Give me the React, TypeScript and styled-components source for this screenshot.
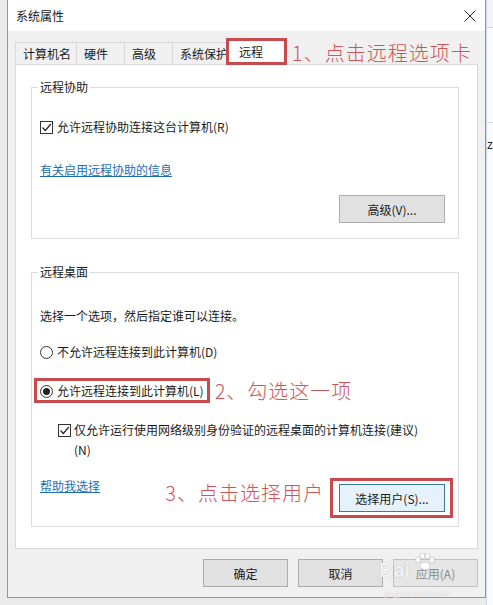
import React from 'react';
import styled, { createGlobalStyle } from 'styled-components';

const GlobalStyle = createGlobalStyle`
  html, body {
    margin: 0;
    padding: 0;
    background: #ebebeb;
    font-family: "Noto Sans CJK SC", "Microsoft YaHei", "Liberation Sans", sans-serif;
    font-size: 12px;
    color: #1a1a1a;
  }
`;

const Page = styled.div`
  display: flex;
  height: 605px;
  padding-left: 7px;
  box-sizing: border-box;
  overflow: hidden;
`;

const Window = styled.div`
  width: 479px;
  height: 598px;
  flex: none;
  box-sizing: border-box;
  border: 1px solid #6f9dd3;
  border-top: none;
  background: #f0f0f0;
  display: flex;
  flex-direction: column;
`;

const SideStrip = styled.div`
  flex: 1;
  display: flex;
  flex-direction: column;
  background: #fbfbfb;
  border-left: 1px solid #c9d8ea;
`;

const SideHead = styled.div`
  height: 27px;
  background: #f3f3f3;
  border-bottom: 1px solid #d6d6d6;
`;

const SideRow = styled.div`
  height: 94px;
  border-bottom: 1px solid #d6d6d6;
`;

const SideText = styled.div`
  margin-top: 14px;
  font-family: "Liberation Sans", sans-serif;
  font-size: 12px;
  line-height: 16px;
  color: #222;
`;

const TitleBar = styled.div`
  height: 31px;
  flex: none;
  background: #ffffff;
  display: flex;
  align-items: center;
  justify-content: space-between;
  padding: 0 9px 0 8px;
`;

const Title = styled.span`
  font-size: 12px;
  line-height: 16px;
`;

const Body = styled.div`
  flex: 1;
  display: flex;
  flex-direction: column;
  padding: 7px 7px 10px 7px;
`;

const TabRow = styled.div`
  display: flex;
  align-items: flex-end;
  height: 26px;
  flex: none;
`;

const Tab = styled.div<{ $w: number }>`
  width: ${p => p.$w}px;
  height: 22px;
  box-sizing: border-box;
  border: 1px solid #d9d9d9;
  border-bottom: none;
  margin-right: -1px;
  padding-left: 7px;
  line-height: 21px;
  white-space: nowrap;
  overflow: hidden;
  background: #f0f0f0;
`;

const RedMark = styled.div<{ $pad: string; $ml?: number; $mr?: number }>`
  display: inline-flex;
  align-items: center;
  box-sizing: border-box;
  border: 3px solid #c94a4d;
  padding: ${p => p.$pad};
  margin-left: ${p => p.$ml ?? 0}px;
  margin-right: ${p => p.$mr ?? 0}px;
  flex: none;
`;

const TabMark = styled(RedMark)`
  height: 27px;
  width: 61px;
  margin-bottom: -1px;
  background: #ffffff;
  position: relative;
  z-index: 1;
`;

const SelectedTab = styled.div`
  line-height: 21px;
  padding-left: 10px;
`;

const Note = styled.span<{ $ml?: number }>`
  font-size: 20px;
  font-weight: 300;
  line-height: 24px;
  color: #cd5558;
  letter-spacing: 1px;
  white-space: nowrap;
  margin-left: ${p => p.$ml ?? 0}px;
`;

const TabNote = styled(Note)`
  align-self: center;
  margin-top: 4px;
`;

const Panel = styled.div`
  height: 485px;
  flex: none;
  box-sizing: border-box;
  background: #ffffff;
  border: 1px solid #d9d9d9;
  padding: 22px 18px 0 15px;
  display: flex;
  flex-direction: column;
`;

const GroupBox = styled.div<{ $h: number; $mt?: number }>`
  height: ${p => p.$h}px;
  margin-top: ${p => p.$mt ?? 0}px;
  box-sizing: border-box;
  border: 1px solid #dcdcdc;
  padding: 0 13px 0 8px;
  display: flex;
  flex-direction: column;
  flex: none;
`;

const GroupTitle = styled.span`
  align-self: flex-start;
  margin: -9px 0 0 -2px;
  padding: 0 2px;
  background: #ffffff;
  line-height: 16px;
`;

const Line = styled.div<{ $mt: number }>`
  margin-top: ${p => p.$mt}px;
  line-height: 16px;
  white-space: nowrap;
`;

const OptionRow = styled.label<{ $mt?: number }>`
  display: flex;
  align-items: center;
  gap: 4px;
  margin-top: ${p => p.$mt ?? 0}px;
  line-height: 16px;
  white-space: nowrap;
`;

const MultiRow = styled.label<{ $mt: number }>`
  display: flex;
  align-items: flex-start;
  gap: 3px;
  margin-top: ${p => p.$mt}px;
  margin-left: 18px;
  line-height: 20px;
  white-space: nowrap;
`;

const Box = styled.span<{ $mt?: number }>`
  width: 13px;
  height: 13px;
  flex: none;
  box-sizing: border-box;
  border: 1px solid #333;
  background: #fff;
  display: flex;
  align-items: center;
  justify-content: center;
  margin-top: ${p => p.$mt ?? 0}px;
`;

const Radio = styled.span<{ $on?: boolean }>`
  width: 13px;
  height: 13px;
  flex: none;
  box-sizing: border-box;
  border: 1px solid #333;
  border-radius: 50%;
  background: #fff;
  display: flex;
  align-items: center;
  justify-content: center;
  &::after {
    content: '';
    width: 7px;
    height: 7px;
    border-radius: 50%;
    background: ${p => (p.$on ? '#222' : 'transparent')};
  }
`;

const Link = styled.a<{ $mt?: number }>`
  align-self: flex-start;
  margin-top: ${p => p.$mt ?? 0}px;
  line-height: 16px;
  color: #1e6db4;
  text-decoration: underline;
  white-space: nowrap;
  cursor: pointer;
`;

const Button = styled.button<{ $w: number; $focus?: boolean; $off?: boolean }>`
  width: ${p => p.$w}px;
  height: 28px;
  flex: none;
  box-sizing: border-box;
  font-family: inherit;
  font-size: 12px;
  padding: 0;
  background: ${p => (p.$focus ? '#e5f1fb' : p.$off ? '#e6e6e6' : '#e1e1e1')};
  border: 1px solid ${p => (p.$focus ? '#3a78b0' : p.$off ? '#c2c2c2' : '#adadad')};
  color: ${p => (p.$off ? '#8a8a8a' : '#1a1a1a')};
`;

const RightButton = styled(Button)`
  align-self: flex-end;
  margin-top: 17px;
`;

const PickRow = styled.div`
  display: flex;
  align-items: center;
  margin-top: 18px;
`;

const BottomRow = styled.div`
  display: flex;
  align-items: center;
  margin-top: 18px;
  height: 40px;
`;

const BottomNote = styled(Note)`
  margin-left: auto;
  margin-right: 6px;
  margin-top: -10px;
`;

const Footer = styled.div`
  position: relative;
  display: flex;
  justify-content: flex-end;
  gap: 10px;
  margin-top: 10px;
`;

const Watermark = styled.div`
  position: absolute;
  left: 364px;
  top: -6px;
  display: flex;
  align-items: flex-start;
  gap: 4px;
  pointer-events: none;
`;

const WaterText = styled.span`
  font-family: "Liberation Sans", sans-serif;
  font-size: 20px;
  font-weight: 700;
  line-height: 26px;
  margin-top: 4px;
  color: rgba(255, 255, 255, 0.85);
  text-shadow: 0 0 1px rgba(90, 90, 90, 0.45);
`;

const WaterSub = styled.span`
  position: absolute;
  left: 6px;
  top: 36px;
  font-family: "Liberation Sans", sans-serif;
  font-size: 8px;
  line-height: 9px;
  color: rgba(255, 255, 255, 0.85);
  text-shadow: 0 0 1px rgba(90, 90, 90, 0.35);
  white-space: nowrap;
`;

const Check = () => (
  <svg width="11" height="11" viewBox="0 0 11 11">
    <path d="M1.5 5.5 L4.3 8.5 L9.8 2" fill="none" stroke="#222" strokeWidth="1.2" />
  </svg>
);

const CloseIcon = () => (
  <svg width="12" height="12" viewBox="0 0 12 12">
    <path d="M0.5 0.5 L11.5 11.5 M11.5 0.5 L0.5 11.5" stroke="#222" strokeWidth="1" />
  </svg>
);

const Paw = () => (
  <svg width="22" height="18" viewBox="0 0 22 18">
    <g fill="rgba(255,255,255,0.85)" stroke="rgba(120,120,120,0.35)" strokeWidth="0.8">
      <ellipse cx="4" cy="7" rx="2.5" ry="3" />
      <ellipse cx="8.5" cy="3" rx="2.5" ry="3" />
      <ellipse cx="13.5" cy="3" rx="2.5" ry="3" />
      <ellipse cx="18" cy="7" rx="2.5" ry="3" />
      <ellipse cx="11" cy="13" rx="5" ry="4" />
    </g>
  </svg>
);

const tabs = [
  { label: '计算机名', w: 62 },
  { label: '硬件', w: 49 },
  { label: '高级', w: 49 },
  { label: '系统保护', w: 57 },
];

export default function App() {
  return (
    <>
      <GlobalStyle />
      <Page>
        <Window>
          <TitleBar>
            <Title>系统属性</Title>
            <CloseIcon />
          </TitleBar>
          <Body>
            <TabRow>
              {tabs.map(t => (
                <Tab key={t.label} $w={t.w}>{t.label}</Tab>
              ))}
              <TabMark $pad="0" $ml={-2}>
                <SelectedTab>远程</SelectedTab>
              </TabMark>
              <TabNote $ml={5}>1、点击远程选项卡</TabNote>
            </TabRow>

            <Panel>
              <GroupBox $h={152}>
                <GroupTitle>远程协助</GroupTitle>
                <OptionRow $mt={24}>
                  <Box><Check /></Box>
                  允许远程协助连接这台计算机(R)
                </OptionRow>
                <Link $mt={27}>有关启用远程协助的信息</Link>
                <RightButton $w={106}>高级(V)...</RightButton>
              </GroupBox>

              <GroupBox $h={255} $mt={33}>
                <GroupTitle>远程桌面</GroupTitle>
                <Line $mt={28}>选择一个选项，然后指定谁可以连接。</Line>
                <OptionRow $mt={20}>
                  <Radio />
                  不允许远程连接到此计算机(D)
                </OptionRow>
                <PickRow>
                  <RedMark $pad="2px 3px 1px 3px" $ml={-6}>
                    <OptionRow>
                      <Radio $on />
                      允许远程连接到此计算机(L)
                    </OptionRow>
                  </RedMark>
                  <Note $ml={5}>2、勾选这一项</Note>
                </PickRow>
                <MultiRow $mt={17}>
                  <Box $mt={4}><Check /></Box>
                  <span>
                    仅允许运行使用网络级别身份验证的远程桌面的计算机连接(建议)
                    <br />
                    (N)
                  </span>
                </MultiRow>
                <BottomRow>
                  <Link>帮助我选择</Link>
                  <BottomNote>3、点击选择用户</BottomNote>
                  <RedMark $pad="3px 5px 3px 6px" $mr={-8}>
                    <Button $w={106} $focus>选择用户(S)...</Button>
                  </RedMark>
                </BottomRow>
              </GroupBox>
            </Panel>

            <Footer>
              <Button $w={85}>确定</Button>
              <Button $w={85}>取消</Button>
              <Button $w={85} $off>应用(A)</Button>
              <Watermark>
                <WaterText>Bai</WaterText>
                <Paw />
                <WaterSub>jingyan.baidu.com</WaterSub>
              </Watermark>
            </Footer>
          </Body>
        </Window>
        <SideStrip>
          <SideHead />
          <SideRow />
          <SideText>z</SideText>
        </SideStrip>
      </Page>
    </>
  );
}
